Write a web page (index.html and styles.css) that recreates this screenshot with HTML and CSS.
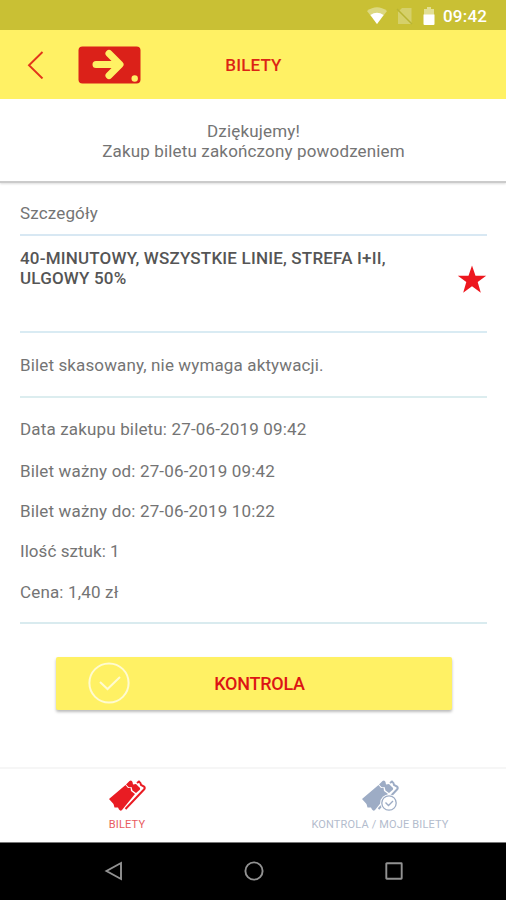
FILE: index.html
```html
<!DOCTYPE html>
<html lang="pl">
<head>
<meta charset="utf-8">
<title>Bilety</title>
<link rel="stylesheet" href="styles.css">
</head>
<body>
<div class="status">
  <svg class="wifi" width="20" height="18" viewBox="0 0 20 18"><path d="M0 4Q10-3.500 20 4L10 17Z" fill="#dcd880"/><path d="M3.400 8Q10 3.400 16.600 8L10 17Z" fill="#fff"/></svg>
  <svg class="sim" width="17" height="18" viewBox="0 0 17 18"><path d="M6 1H15.500V17H2V5Z" fill="#d5d06a"/><path d="M1 2L16 17" stroke="#b9b432" stroke-width="1.500"/></svg>
  <svg class="battery" width="12" height="18" viewBox="0 0 12 18"><path d="M1 2H4V0H8V2H11V8H1Z" fill="#e2df93"/><path d="M.500 7.500H11.500V17Q11.500 18 10.500 18H1.500Q.500 18 .500 17Z" fill="#fff"/></svg>
  <span class="clock">09:42</span>
</div>
<header class="header">
  <svg class="back" width="18" height="28" viewBox="0 0 18 28"><path d="M15.500 1L2 14.200L15.500 27.500" fill="none" stroke="#e2351b" stroke-width="1.900"/></svg>
  <svg class="logo" width="63" height="38" viewBox="0 0 63 38"><rect x=".500" y=".500" width="62" height="37" rx="4" fill="#db2119"/><path d="M18 18.500H39M31 7.500L42 18.500L31 29.500" fill="none" stroke="#fff164" stroke-width="7" stroke-linecap="round" stroke-linejoin="round"/><circle cx="56.700" cy="32.500" r="3.200" fill="#fff164"/></svg>
  <h1>BILETY</h1>
</header>
<section class="message"><p>Dziękujemy!</p><p>Zakup biletu zakończony powodzeniem</p></section>
<main class="details">
  <div class="caption"><span>Szczegóły</span></div>
  <div class="ticket">
    <h2><span>40-MINUTOWY, WSZYSTKIE LINIE, STREFA I+II,</span><br><span>ULGOWY 50%</span></h2>
    <svg width="30" height="29" viewBox="0 0 30 29"><path d="M15 .500L18.500 10.700H29.200L20.700 17L23.800 27.700L15 21.300L6.200 27.700L9.300 17L.800 10.700H11.500Z" fill="#ed171e"/></svg>
  </div>
  <div class="note"><span>Bilet skasowany, nie wymaga aktywacji.</span></div>
  <div class="facts">
    <p>Data zakupu biletu: 27-06-2019 09:42</p>
    <p>Bilet ważny od: 27-06-2019 09:42</p>
    <p>Bilet ważny do: 27-06-2019 10:22</p>
    <p class="count">Ilość sztuk: 1</p>
    <p>Cena: 1,40 zł</p>
  </div>
  <button class="check" type="button">
    <svg width="42" height="42" viewBox="0 0 42 42" fill="none" stroke="#fffbd0" stroke-width="2"><circle cx="21" cy="21" r="19.600"/><path d="M12 20L19.500 27L32 15"/></svg>
    <span>KONTROLA</span>
  </button>
</main>
<nav class="tabs">
  <div class="tab active">
    <svg width="38" height="33" viewBox="0 0 38 33" fill="#e91c23"><path d="M1 19L17.500 5L20 8L22.500 7.500L23 11L27 14L14 30Q12.500 31.500 11 29.500L10 27.500L6.500 27.500L5.500 24Z"/><path d="M18 4.500L21.500 1Q23.500-.500 24.500 2L25 4.500L28 4L31 7Q33 8.500 31.500 10L28 13L24.500 10.500L23.500 7L20.500 7Z"/><path d="M29 3L31 1.500Q33 3 33 5L36 6.500Q37.500 8 36 9.500L17.500 29" fill="none" stroke="#e91c23" stroke-width="2"/></svg>
    <span>BILETY</span>
  </div>
  <div class="tab">
    <svg width="38" height="33" viewBox="0 0 38 33" fill="#9dacc5"><path d="M1 19L17.500 5L20 8L22.500 7.500L23 11L27 14L14 30Q12.500 31.500 11 29.500L10 27.500L6.500 27.500L5.500 24Z"/><path d="M18 4.500L21.500 1Q23.500-.500 24.500 2L25 4.500L28 4L31 7Q33 8.500 31.500 10L28 13L24.500 10.500L23.500 7L20.500 7Z"/><path d="M29 3L31 1.500Q33 3 33 5L36 6.500Q37.500 8 36 9.500L17.500 29" fill="none" stroke="#9dacc5" stroke-width="2"/><circle cx="28" cy="23" r="8.800" fill="#fff"/><circle cx="28" cy="23" r="7.200" fill="#fff" stroke="#9dacc5" stroke-width="1.300"/><path d="M24.500 22.500L27.500 25.500L32 21" fill="none" stroke="#9dacc5" stroke-width="1.400"/></svg>
    <span>KONTROLA / MOJE BILETY</span>
  </div>
</nav>
<footer class="system">
  <svg width="20" height="20" viewBox="0 0 20 20"><path d="M17 2V18L2.500 10Z"/></svg>
  <svg width="20" height="20" viewBox="0 0 20 20"><circle cx="10" cy="10" r="8.600"/></svg>
  <svg width="20" height="20" viewBox="0 0 20 20"><rect x="2.300" y="2.300" width="15.400" height="15.400" rx=".500"/></svg>
</footer>
</body>
</html>
```
FILE: styles.css
```css
* { box-sizing: border-box; }
body { margin: 0; width: 506px; height: 900px; overflow: hidden; background: #fff; color: #747474; font: 17px/20px Roboto, sans-serif; letter-spacing: .16px; }
p, h1, h2 { margin: 0; }
svg { display: block; flex: none; }
span { white-space: nowrap; }

.status { height: 30px; background: #c9c034; display: flex; align-items: center; padding: 2px 0 0 367px; }
.sim { margin-left: 9px; }
.battery { margin-left: 10px; }
.clock { margin-left: 8px; color: #fff; font-size: 17px; font-weight: 500; letter-spacing: .2px; }

.header { height: 69px; background: #fff164; display: grid; grid-template-columns: 27px 51px 1fr; align-items: center; position: relative; }
.back { grid-column: 2; }
.logo { grid-column: 3; }
.header h1 { position: absolute; left: 0; right: -1px; top: 25px; text-align: center; color: #dc2414; font-size: 17px; line-height: 20px; font-weight: 500; }

.message { height: 84px; padding: 22px 0 0 1px; border-bottom: 2px solid #cbcbcb; box-shadow: 0 1px 2px #ddd; text-align: center; }

.details { padding: 0 19px 0 20px; height: 584px; }
.caption { height: 53px; padding-top: 20px; border-bottom: 2px solid #d8e8f3; }
.ticket { height: 97px; border-bottom: 2px solid #d9ebf3; padding-top: 12px; display: flex; justify-content: space-between; }
.ticket h2 { color: #555; font-size: 17px; line-height: 20px; font-weight: 500; letter-spacing: .19px; }
.ticket svg { margin-top: 17px; }
.note { height: 65px; padding-top: 22px; border-bottom: 2px solid #dcedef; letter-spacing: .13px; }
.facts { height: 226px; padding-top: 21px; border-bottom: 2px solid #d9ebef; }
.facts p { height: 20px; margin-bottom: 20px; }
.facts p:first-child { margin-bottom: 22px; }
.facts .count { margin-bottom: 21px; letter-spacing: .05px; }
.check { width: 396px; height: 53px; margin: 33px 0 0 36px; border: 0; border-radius: 2px; background: #fff164; box-shadow: 0 2px 3px #bbb; display: grid; grid-template-columns: 32px 42px 1fr; align-items: center; padding: 0; position: relative; color: #dc1414; font: 500 18px/20px Roboto, sans-serif; letter-spacing: -.25px; }
.check svg { grid-column: 2; margin-top: -1px; }
.check span { position: absolute; left: 0; right: -11px; text-align: center; top: 17px; }

.tabs { height: 75px; border-top: 2px solid #f6f6f6; display: grid; grid-template-columns: 1fr 1fr; }
.tab { display: flex; flex-direction: column; align-items: center; padding-top: 11px; color: #b3bccd; font-size: 11px; line-height: 14px; }
.tab span { margin: 5px 0 0 1px; }
.active { color: #e85b60; }
.system { height: 58px; border-top: 1px solid #777; background: #000; display: flex; justify-content: space-between; padding: 18px 102px 0 104px; }
.system svg { fill: none; stroke: #929292; stroke-width: 1.900; }
```
